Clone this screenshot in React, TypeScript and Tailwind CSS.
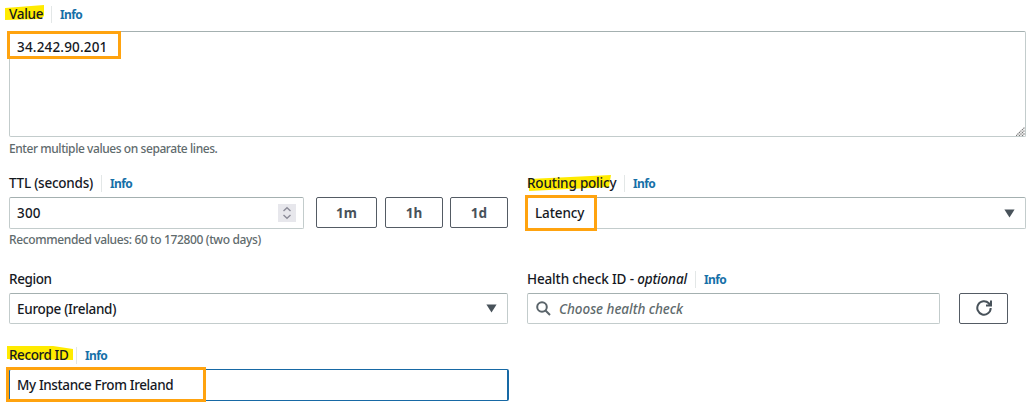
import type { ReactNode } from 'react';

const Caret = () => (
  <svg className="h-[9px] w-[11px] shrink-0" viewBox="0 0 11 9">
    <path d="M.4.4h10.2L5.5 8.6z" fill="#48525a" />
  </svg>
);

function Label({ children, width, tracking = '', info = true, mark }: { children: ReactNode; width: string; tracking?: string; info?: boolean; mark?: ReactNode }) {
  return (
    <div className="relative flex h-5 items-center">
      {mark}
      <span className={`relative whitespace-nowrap ${width} ${tracking}`}>{children}</span>
      {info && (
        <a className="ml-2 flex h-[17px] items-center border-l border-[#e3e7e7] pt-px pl-2 text-[12px] font-bold tracking-[-0.65px] text-[#1670a8]">Info</a>
      )}
    </div>
  );
}

const Field = ({ children, className = '' }: { children: ReactNode; className?: string }) => (
  <div className={`relative flex items-center whitespace-nowrap rounded-[2px] border border-[#c3cccc] border-t-[#a4b0b0] ${className}`}>{children}</div>
);

const Preset = ({ children, className }: { children: ReactNode; className: string }) => (
  <button className={`h-[31px] rounded-[2px] border border-[#545b64] text-[13.5px] font-bold text-[#48525a] ${className}`}>{children}</button>
);

const Outline = ({ className }: { className: string }) => (
  <div className={`pointer-events-none absolute border-[3px] border-[#ffa30f] ${className}`} />
);

export default function App() {
  return (
    <main className="h-[406px] w-[1033px] overflow-hidden bg-white pt-1 pr-[7px] pl-[9px] font-['Noto_Sans',sans-serif] text-[13.5px] leading-5 font-medium text-[#16191f]">
      <Label width="w-[34px]" tracking="tracking-[-0.3px]" mark={<svg className="absolute top-0 -left-[6px] h-5 w-11"><path d="M2 4 41 1V12L37 15 2 16Z" fill="#ffeb00" /></svg>}>Value</Label>
      <Field className="mt-[7px] h-[106px] items-start! px-[7px] pt-[5px]">
        <span className="tracking-[0.17px]">34.242.90.201</span>
        <Outline className="-top-[1px] -left-[3px] h-7 w-[114px]" />
        <svg className="absolute right-0 bottom-0 h-[9px] w-[9px]" viewBox="0 0 9 9"><path d="M0 9 9 0M3 9 9 3M6 9 9 6" stroke="#777" strokeWidth="1.2" strokeDasharray="1.4 .7" /></svg>
      </Field>
      <p className="mt-[2px] text-[12px] tracking-[-0.43px] text-[#5f6b6d]">Enter multiple values on separate lines.</p>

      <div className="mt-[14px] flex h-[96px]">
        <section className="w-[518px]">
          <Label width="w-[84px]" tracking="tracking-[-0.25px]">TTL (seconds)</Label>
          <div className="mt-1 flex">
            <Field className="h-8 w-[295px] justify-between pr-[7px] pl-[7px]">
              <span className="tracking-[0.2px]">300</span>
              <span className="flex h-[18px] w-[18px] items-center justify-center bg-[#e7e7ec]">
                <svg className="h-3.5 w-2.5" viewBox="0 0 10 14"><path d="M1.5 5 5 1.8 8.5 5M1.5 9 5 12.2 8.5 9" fill="none" stroke="#8b8b98" strokeWidth="1.4" /></svg>
              </span>
            </Field>
            <Preset className="ml-3 w-[61px]">1m</Preset>
            <Preset className="ml-2 w-[58px]">1h</Preset>
            <Preset className="ml-[7px] w-[58px]">1d</Preset>
          </div>
          <p className="mt-px text-[12px] tracking-[-0.37px] text-[#5f6b6d]">Recommended values: 60 to 172800 (two days)</p>
        </section>
        <section className="w-[499px]">
          <Label width="w-[89px]" tracking="tracking-[-0.19px]" mark={<svg className="absolute top-0 left-0 h-5 w-24"><path d="M2 6 84 2 82 14 2 18Z" fill="#ffeb00" /></svg>}>Routing policy</Label>
          <Field className="mt-1 h-8 justify-between pr-[10px] pl-[7px]">
            <span className="tracking-[-0.1px]">Latency</span><Caret />
            <Outline className="-top-[3px] -left-[3px] h-9 w-[72px]" />
          </Field>
        </section>
      </div>

      <div className="flex h-[76px]">
        <section className="w-[518px]">
          <Label width="w-[43px]" tracking="tracking-[-0.4px]" info={false}>Region</Label>
          <Field className="mt-1 h-[31px] w-[499px] justify-between pr-[10px] pl-[7px]"><span className="tracking-[-0.3px]">Europe (Ireland)</span><Caret /></Field>
        </section>
        <section className="w-[499px]">
          <Label width="w-[160px]" tracking="tracking-[-0.15px]">Health check ID - <i>optional</i></Label>
          <div className="mt-1 flex">
            <Field className="h-[31px] w-[413px] pl-2">
              <svg className="h-[15px] w-[15px]" viewBox="0 0 15 15" fill="none" stroke="#5a646a" strokeWidth="2"><circle cx="6" cy="6" r="4.8" /><path d="m9.5 9.5 4.5 4.5" /></svg>
              <i className="ml-2 tracking-[-0.04px] text-[#5f6b6d]">Choose health check</i>
            </Field>
            <button aria-label="Refresh" className="ml-[19px] flex h-[31px] w-[49px] items-center justify-center rounded-[2px] border border-[#545b64]">
              <svg className="h-4 w-4 -translate-y-px" viewBox="0 0 16 16" fill="none" stroke="#48525a" strokeWidth="2"><path d="M14.7 8A6.7 6.7 0 1 1 12.8 3.3L14.5 5M15 .5V5.5H10" /></svg>
            </button>
          </div>
        </section>
      </div>

      <Label width="w-[59px]" tracking="tracking-[-0.42px]" mark={<svg className="absolute top-0 -left-[3px] h-5 w-[70px]"><path d="M1 1H47L67 4V15L1 14Z" fill="#ffeb00" /></svg>}>Record ID</Label>
      <div className="relative mt-1 flex h-8 w-[500px] items-center rounded-[2px] border border-r-2 border-[#1769a5] pl-[7px]">
        <span className="tracking-[-0.38px]">My Instance From Ireland</span>
        <Outline className="-top-[3px] -left-[4px] h-[35px] w-[200px]" />
      </div>
    </main>
  );
}
